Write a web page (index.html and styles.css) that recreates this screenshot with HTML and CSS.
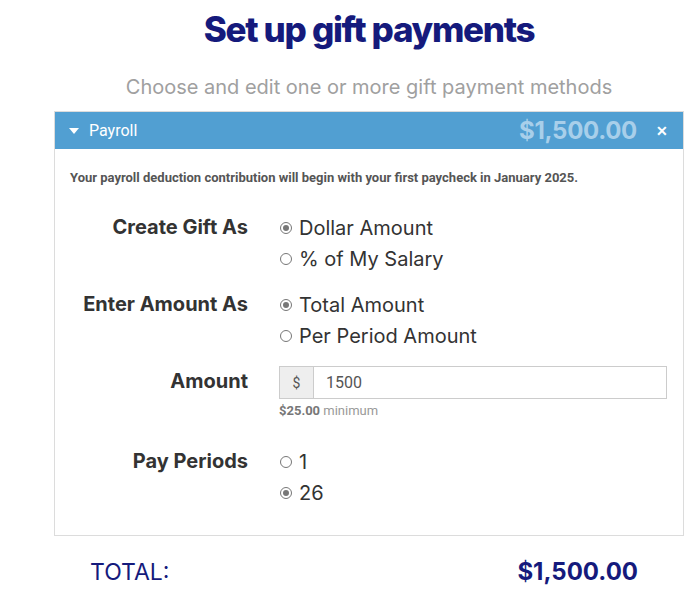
FILE: index.html
```html
<!DOCTYPE html>
<html>
<head>
<meta charset="utf-8">
<link rel="stylesheet" href="styles.css">
</head>
<body>
<div class="page">
  <h1 class="title">Set up gift payments</h1>
  <p class="subtitle">Choose and edit one or more gift payment methods</p>
  <div class="panel">
    <div class="panel-head">
      <span class="caret"></span>
      <span class="panel-name">Payroll</span>
      <span class="panel-amount">$1,500.00</span>
      <span class="close">&#x2715;</span>
    </div>
    <div class="panel-body">
      <p class="notice">Your payroll deduction contribution will begin with your first paycheck in January 2025.</p>
      <div class="row">
        <div class="label">Create Gift As</div>
        <div class="opts">
          <label class="opt"><span class="radio on"></span>Dollar Amount</label>
          <label class="opt"><span class="radio"></span>% of My Salary</label>
        </div>
      </div>
      <div class="row">
        <div class="label">Enter Amount As</div>
        <div class="opts">
          <label class="opt"><span class="radio on"></span>Total Amount</label>
          <label class="opt"><span class="radio"></span>Per Period Amount</label>
        </div>
      </div>
      <div class="row row-amount">
        <div class="label">Amount</div>
        <div class="opts">
          <div class="input-group">
            <span class="addon">$</span>
            <span class="field">1500</span>
          </div>
          <div class="help"><b>$25.00</b> minimum</div>
        </div>
      </div>
      <div class="row row-periods">
        <div class="label">Pay Periods</div>
        <div class="opts">
          <label class="opt"><span class="radio"></span>1</label>
          <label class="opt"><span class="radio on"></span>26</label>
        </div>
      </div>
    </div>
  </div>
  <div class="total">
    <span class="total-label">TOTAL:</span>
    <span class="total-amount">$1,500.00</span>
  </div>
</div>
</body>
</html>
```
FILE: styles.css
```css
html, body {
  margin: 0;
  padding: 0;
  background: #fff;
}
body {
  font-family: Inter, "Liberation Sans", sans-serif;
}
.page {
  width: 630px;
  margin-left: 54px;
  padding-top: 8px;
}
.title {
  margin: 0;
  text-align: center;
  font-family: Inter, sans-serif;
  font-weight: 800;
  font-size: 35px;
  letter-spacing: -1.3px;
  line-height: 42px;
  color: #151a7c;
}
.subtitle {
  margin: 25px 0 0;
  text-align: center;
  font-size: 20px;
  line-height: 24px;
  color: #a0a0a0;
}
.panel {
  margin-top: 12px;
  border: 1px solid #dcdcdc;
}
.panel-head {
  display: flex;
  align-items: center;
  height: 37px;
  background: #519fd2;
  padding: 0 15px 0 14px;
  font-family: Roboto, sans-serif;
}
.caret {
  width: 0;
  height: 0;
  border-left: 5px solid transparent;
  border-right: 5px solid transparent;
  border-top: 6px solid #fff;
  margin-right: 10px;
}
.panel-name {
  color: #fff;
  font-size: 16px;
}
.panel-amount {
  margin-left: auto;
  color: #a8cfea;
  font-family: Inter, sans-serif;
  font-weight: 700;
  font-size: 24px;
  letter-spacing: -0.3px;
}
.close {
  color: #fff;
  font-weight: 900;
  font-size: 14px;
  margin-left: 19px;
}
.panel-body {
  padding: 21px 16px 27px 15px;
}
.notice {
  margin: 0 0 27px;
  font-family: Roboto, sans-serif;
  font-weight: 700;
  font-size: 13px;
  color: #555;
}
.row {
  display: grid;
  grid-template-columns: 178px 1fr;
  column-gap: 31px;
  margin-bottom: 15px;
}
.label {
  text-align: right;
  font-weight: 700;
  font-size: 20px;
  line-height: 31px;
  color: #333;
}
.opt {
  display: flex;
  align-items: center;
  height: 31px;
  font-size: 20px;
  color: #333;
}
.radio {
  box-sizing: border-box;
  width: 12px;
  height: 12px;
  border-radius: 50%;
  border: 1px solid #777;
  background: #fff;
  margin: 0 7px 0 1px;
  position: relative;
  flex: none;
}
.radio.on::after {
  content: "";
  position: absolute;
  left: 2px;
  top: 2px;
  width: 6px;
  height: 6px;
  border-radius: 50%;
  background: #777;
}
.row-amount {
  margin-bottom: 28px;
}
.input-group {
  display: flex;
  height: 33px;
  box-sizing: border-box;
  border: 1px solid #ccc;
  font-family: Roboto, sans-serif;
  font-size: 16px;
  color: #555;
}
.addon {
  width: 33px;
  background: #eee;
  border-right: 1px solid #ccc;
  display: flex;
  align-items: center;
  justify-content: center;
  font-size: 14px;
}
.field {
  display: flex;
  align-items: center;
  padding-left: 12px;
  color: #555;
}
.help {
  margin-top: 4px;
  font-family: Roboto, sans-serif;
  font-size: 13px;
  color: #999;
}
.help b {
  color: #777;
}
.row-periods {
  margin-bottom: 0;
}
.total {
  display: flex;
  justify-content: space-between;
  align-items: center;
  padding: 21px 46px 0 36px;
  color: #151a7c;
}
.total-label {
  font-family: Inter, sans-serif;
  font-size: 23px;
  font-weight: 400;
}
.total-amount {
  font-family: Inter, sans-serif;
  font-weight: 700;
  font-size: 24px;
}
```
